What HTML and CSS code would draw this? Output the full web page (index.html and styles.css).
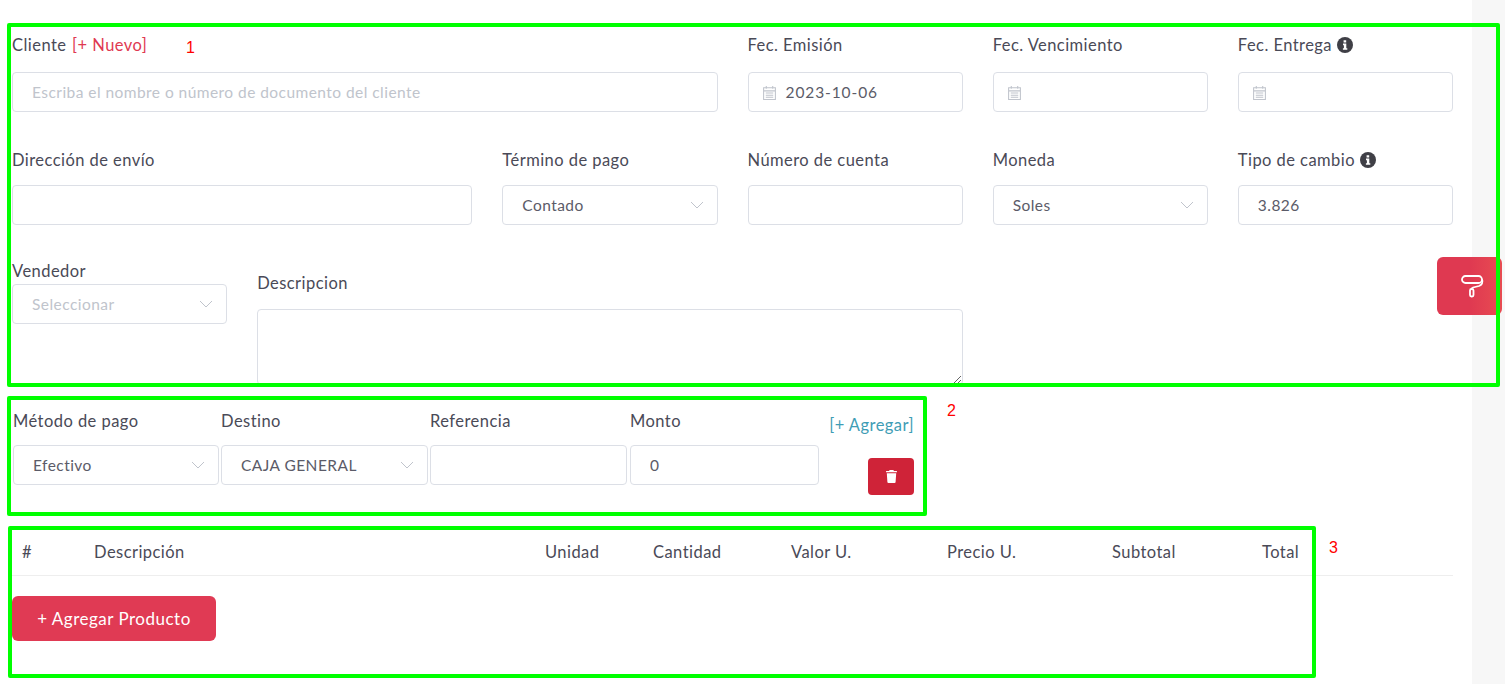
FILE: index.html
```html
<!DOCTYPE html>
<html lang="es">
<head>
    <meta charset="UTF-8">
    <meta name="viewport" content="width=device-width, initial-scale=1.0">
    <title>Nuevo comprobante</title>
    <link rel="stylesheet" href="styles.css">
</head>
<body>
    <div class="page">
        <main class="content">
            <section class="form-grid">
                <div class="field span-6">
                    <label class="field-label">Cliente <a class="link-new" href="#">[+ Nuevo]</a></label>
                    <input class="input" type="text" placeholder="Escriba el nombre o número de documento del cliente">
                </div>
                <div class="field span-2">
                    <label class="field-label">Fec. Emisión</label>
                    <div class="input date-input">
                        <svg class="cal-icon" viewBox="0 0 14 14"><path d="M1.5 2.5h11v11h-11zM1.5 5.5h11M4 1v2.5M10 1v2.5M3.5 7.5h7M3.5 9.5h7M3.5 11.5h7"/></svg>
                        <span class="date-value">2023-10-06</span>
                    </div>
                </div>
                <div class="field span-2">
                    <label class="field-label">Fec. Vencimiento</label>
                    <div class="input date-input">
                        <svg class="cal-icon" viewBox="0 0 14 14"><path d="M1.5 2.5h11v11h-11zM1.5 5.5h11M4 1v2.5M10 1v2.5M3.5 7.5h7M3.5 9.5h7M3.5 11.5h7"/></svg>
                    </div>
                </div>
                <div class="field span-2">
                    <label class="field-label">Fec. Entrega <svg class="info-icon" viewBox="0 0 16 16"><circle cx="8" cy="8" r="8"/><path class="info-i" d="M6.6 3.2h2.6v2.3H6.6zM6 6.6h3.3v4.6h1v1.6H5.9v-1.6h1V8.200H6z"/></svg></label>
                    <div class="input date-input">
                        <svg class="cal-icon" viewBox="0 0 14 14"><path d="M1.5 2.5h11v11h-11zM1.5 5.5h11M4 1v2.5M10 1v2.5M3.5 7.5h7M3.5 9.5h7M3.5 11.5h7"/></svg>
                    </div>
                </div>

                <div class="field span-4 row-two">
                    <label class="field-label">Dirección de envío</label>
                    <input class="input" type="text">
                </div>
                <div class="field span-2 row-two">
                    <label class="field-label">Término de pago</label>
                    <div class="input select"><span>Contado</span>
                        <svg class="chevron" viewBox="0 0 14 8"><path d="M1 1l6 6 6-6"/></svg>
                    </div>
                </div>
                <div class="field span-2 row-two">
                    <label class="field-label">Número de cuenta</label>
                    <input class="input" type="text">
                </div>
                <div class="field span-2 row-two">
                    <label class="field-label">Moneda</label>
                    <div class="input select"><span>Soles</span>
                        <svg class="chevron" viewBox="0 0 14 8"><path d="M1 1l6 6 6-6"/></svg>
                    </div>
                </div>
                <div class="field span-2 row-two">
                    <label class="field-label">Tipo de cambio <svg class="info-icon" viewBox="0 0 16 16"><circle cx="8" cy="8" r="8"/><path class="info-i" d="M6.6 3.2h2.6v2.3H6.6zM6 6.6h3.3v4.6h1v1.6H5.9v-1.6h1V8.200H6z"/></svg></label>
                    <input class="input" type="text" value="3.826">
                </div>

                <div class="field span-2 vendedor">
                    <label class="field-label">Vendedor</label>
                    <div class="input select placeholder"><span>Seleccionar</span>
                        <svg class="chevron" viewBox="0 0 14 8"><path d="M1 1l6 6 6-6"/></svg>
                    </div>
                </div>
                <div class="field span-6 descripcion">
                    <label class="field-label">Descripcion</label>
                    <textarea class="textarea"></textarea>
                </div>
            </section>

            <section class="payment-row">
                <div class="pay-col pay-method">
                    <label class="pay-label">Método de pago</label>
                    <div class="input select"><span>Efectivo</span>
                        <svg class="chevron" viewBox="0 0 14 8"><path d="M1 1l6 6 6-6"/></svg>
                    </div>
                </div>
                <div class="pay-col pay-dest">
                    <label class="pay-label">Destino</label>
                    <div class="input select"><span>CAJA GENERAL</span>
                        <svg class="chevron" viewBox="0 0 14 8"><path d="M1 1l6 6 6-6"/></svg>
                    </div>
                </div>
                <div class="pay-col pay-ref">
                    <label class="pay-label">Referencia</label>
                    <input class="input" type="text">
                </div>
                <div class="pay-col pay-amount">
                    <label class="pay-label">Monto</label>
                    <input class="input" type="text" value="0">
                </div>
                <div class="pay-actions">
                    <a class="link-add" href="#">[+ Agregar]</a>
                    <button class="btn-trash" type="button">
                        <svg viewBox="0 0 11 13"><path d="M3.600 0h3.800l0.500 1H10.500a0.500 0.500 0 0 1 0.500 0.500v0.700H0v-0.700a0.500 0.500 0 0 1 0.500-0.500h2.600zM0.800 3.200h9.400l-0.600 8.700a1.100 1.100 0 0 1-1.100 1.100H2.500a1.100 1.100 0 0 1-1.100-1.100z"/></svg>
                    </button>
                </div>
            </section>

            <table class="items">
                <thead>
                    <tr>
                        <th class="col-num">#</th>
                        <th class="col-desc">Descripción</th>
                        <th class="col-unit">Unidad</th>
                        <th class="col-qty">Cantidad</th>
                        <th class="col-val">Valor U.</th>
                        <th class="col-price">Precio U.</th>
                        <th class="col-sub">Subtotal</th>
                        <th class="col-total">Total</th>
                    </tr>
                </thead>
            </table>
            <button class="btn-add" type="button">+ Agregar Producto</button>
        </main>
        <aside class="side-strip"></aside>
    </div>

    <button class="btn-theme" type="button">
        <svg viewBox="0 0 26 26"><rect x="3" y="3" width="20" height="7" rx="3.500"/><path d="M23 6.500c1.500 3-0.500 5.500-3 6.500l-6 1.500c-1 0.300-1.500 0.800-1.500 1.500"/><rect x="11" y="16" width="3.500" height="7.500" rx="1.500"/></svg>
    </button>

    <div class="note-box note-one"></div>
    <div class="note-box note-two"></div>
    <div class="note-box note-three"></div>
    <span class="note-num num-one">1</span>
    <span class="note-num num-two">2</span>
    <span class="note-num num-three">3</span>
</body>
</html>
```

FILE: styles.css
```css
* {
    box-sizing: border-box;
}

html, body {
    margin: 0;
    height: 684px;
    overflow: hidden;
}

body {
    font-family: 'Lato', sans-serif;
    font-size: 16.5px;
    letter-spacing: 0.45px;
    color: #4a4a57;
    background-color: #fff;
    position: relative;
}

.page {
    display: flex;
    height: 684px;
}

.content {
    flex: 1;
    padding: 33px 19px 0 12px;
    min-width: 0;
}

.side-strip {
    width: 33px;
    background-color: #f7f7f7;
}

/* formulario */
.form-grid {
    display: grid;
    grid-template-columns: repeat(12, minmax(0, 1fr));
    column-gap: 30px;
}

.span-2 { grid-column: span 2; }
.span-4 { grid-column: span 4; }
.span-6 { grid-column: span 6; }

.field-label {
    display: block;
    height: 24px;
    line-height: 24px;
    margin-bottom: 15px;
    white-space: nowrap;
}

.link-new {
    margin-left: 1px;
    color: #df3951;
    text-decoration: none;
}

.row-two {
    margin-top: 36px;
}

.row-two .field-label {
    margin-bottom: 13px;
}

.vendedor {
    margin-top: 34px;
}

.vendedor .field-label {
    margin-bottom: 1px;
}

.descripcion {
    margin-top: 46px;
}

.descripcion .field-label {
    margin-bottom: 14px;
}

.input {
    display: flex;
    align-items: center;
    width: 100%;
    height: 40px;
    padding: 0 19px;
    font-family: inherit;
    font-size: 15.5px;
    letter-spacing: 0.45px;
    color: #5b5b68;
    background: #fff;
    border: 1px solid #dcdfe6;
    border-radius: 4px;
    outline: none;
}

.input::placeholder {
    color: #c0c4cc;
}

.date-input {
    padding-left: 13px;
    gap: 9px;
}

.date-value {
    letter-spacing: 0.9px;
}

.cal-icon {
    width: 15px;
    height: 15px;
    fill: none;
    stroke: #c0c4cc;
    stroke-width: 1;
}

.info-icon {
    width: 16px;
    height: 16px;
    vertical-align: -2px;
    fill: #3f3f46;
}

.info-i {
    fill: #fff;
}

.select {
    justify-content: space-between;
    padding-right: 13px;
}

.select.placeholder {
    color: #c0c4cc;
}

.chevron {
    width: 14px;
    height: 8px;
    fill: none;
    stroke: #c0c4cc;
    stroke-width: 1;
}

.textarea {
    display: block;
    width: 100%;
    height: 76px;
    border: 1px solid #dcdfe6;
    border-radius: 4px;
    outline: none;
}

/* metodos de pago */
.payment-row {
    display: flex;
    margin-top: 26px;
    padding-left: 1px;
}

.pay-col {
    flex-shrink: 0;
}

.pay-method { width: 206px; margin-right: 2px; }
.pay-dest { width: 207px; margin-right: 2px; }
.pay-ref { width: 197px; margin-right: 3px; }
.pay-amount { width: 189px; margin-right: 3px; }

.pay-label {
    display: block;
    height: 24px;
    margin-bottom: 10px;
}

.pay-actions {
    display: flex;
    flex-direction: column;
    align-items: flex-end;
    width: 92px;
    padding-top: 2px;
}

.link-add {
    color: #3f9db5;
    text-decoration: none;
    line-height: 24px;
    white-space: nowrap;
}

.btn-trash {
    display: flex;
    align-items: center;
    justify-content: center;
    width: 46px;
    height: 37px;
    margin-top: 21px;
    padding: 0;
    background-color: #cf2338;
    border: none;
    border-radius: 4px;
}

.btn-trash svg {
    width: 11px;
    height: 13px;
    fill: #fff;
}

/* tabla de items */
.items {
    width: 100%;
    margin-top: 34px;
    border-collapse: collapse;
    table-layout: fixed;
}

.items th {
    height: 46px;
    padding: 0;
    font-weight: 400;
    text-align: left;
    border-bottom: 1px solid #eee;
}

.col-num { width: 82px; padding-left: 10px !important; }
.col-desc { width: 451px; }
.col-unit { width: 108px; }
.col-qty { width: 138px; }
.col-val { width: 156px; }
.col-price { width: 165px; }
.col-sub { width: 150px; }

.btn-add {
    display: block;
    width: 204px;
    height: 45px;
    margin-top: 20px;
    padding: 0;
    font-family: inherit;
    font-size: 17px;
    letter-spacing: 0.5px;
    color: #fff;
    background-color: #e03a54;
    border: none;
    border-radius: 6px;
}

/* boton flotante */
.btn-theme {
    position: absolute;
    left: 1437px;
    top: 257px;
    display: flex;
    align-items: center;
    justify-content: center;
    width: 65px;
    height: 58px;
    padding: 0 0 0 4px;
    background: linear-gradient(90deg, #df3951 50%, #e84c52);
    border: none;
    border-radius: 6px;
}

.btn-theme svg {
    width: 26px;
    height: 26px;
    fill: none;
    stroke: #fff;
    stroke-width: 1.8;
}

/* anotaciones */
.note-box {
    position: absolute;
    border: 4px solid #00ff00;
    border-radius: 2px;
    pointer-events: none;
}

.note-one { left: 7px; top: 23px; width: 1493px; height: 364px; }
.note-two { left: 7px; top: 396px; width: 920px; height: 120px; }
.note-three { left: 8px; top: 526px; width: 1308px; height: 152px; }

.note-num {
    position: absolute;
    font-family: 'Liberation Sans', sans-serif;
    font-size: 16px;
    letter-spacing: 0;
    color: #ff0000;
}

.num-one { left: 186px; top: 39px; }
.num-two { left: 947px; top: 402px; }
.num-three { left: 1329px; top: 539px; }
```
